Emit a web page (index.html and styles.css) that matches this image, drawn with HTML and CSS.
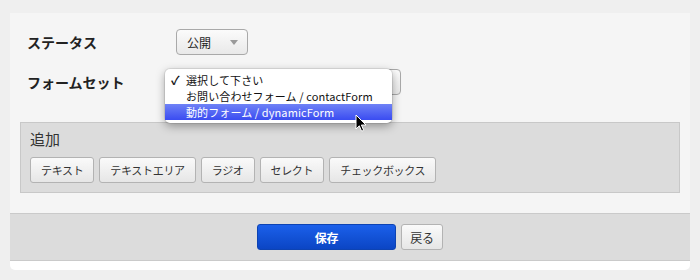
FILE: index.html
```html
<!DOCTYPE html>
<html lang="ja">
<head>
<meta charset="utf-8">
<link rel="stylesheet" href="styles.css">
</head>
<body>
<div class="card">
  <div class="content">
    <div class="row">
      <div class="label">ステータス</div>
      <div class="select s1"><span>公開</span><i class="arrow"></i></div>
    </div>
    <div class="row">
      <div class="label">フォームセット</div>
      <div class="select s2">
        <div class="popup">
          <div class="item"><span class="check">✓</span>選択して下さい</div>
          <div class="item">お問い合わせフォーム / contactForm</div>
          <div class="item active">動的フォーム / dynamicForm</div>
        </div>
        <svg class="cursor" width="12" height="19" viewBox="0 0 12 19"><path d="M1 1 L1 15 L4.3 11.8 L6.6 17.2 L8.7 16.3 L6.4 11 L11 11 Z" fill="#000" stroke="#fff" stroke-width="1" stroke-linejoin="round"/></svg>
      </div>
    </div>
    <div class="panel">
      <div class="panel-title">追加</div>
      <div class="btns">
        <button class="btn">テキスト</button>
        <button class="btn">テキストエリア</button>
        <button class="btn">ラジオ</button>
        <button class="btn">セレクト</button>
        <button class="btn">チェックボックス</button>
      </div>
    </div>
  </div>
  <div class="footer">
    <button class="btn primary">保存</button>
    <button class="btn back">戻る</button>
  </div>
</div>
</body>
</html>
```
FILE: styles.css
```css
* { box-sizing: border-box; }
body {
  margin: 0;
  background: #efefef;
  font-family: "Noto Sans CJK JP", "Noto Sans", sans-serif;
  color: #222;
}
.card {
  margin: 13px 0 0 10px;
  width: 680px;
  height: 257px;
  background: #fff;
  border-radius: 0 0 5px 5px;
  overflow: hidden;
}
.content {
  background: #f5f5f5;
  padding: 16px 0 20px;
}
.row {
  display: flex;
  align-items: center;
  padding-left: 17px;
  height: 26px;
  margin-bottom: 14px;
}
.row + .row { margin-bottom: 0; }
.label {
  width: 149px;
  font-size: 14px;
  font-weight: bold;
  line-height: 26px;
}
.select {
  position: relative;
  height: 26px;
  border: 1px solid #a9a9a9;
  border-radius: 4px;
  background: linear-gradient(#fbfbfb, #e9e9e9);
  display: flex;
  align-items: center;
  font-size: 12px;
}
.s1 { width: 72px; padding: 0 9px 0 10px; justify-content: space-between; }
.s2 { width: 225px; }
.arrow {
  width: 0; height: 0;
  border-left: 4px solid transparent;
  border-right: 4px solid transparent;
  border-top: 5px solid #9a9a9a;
}
.popup {
  position: absolute;
  left: -12px;
  top: -1px;
  width: 227px;
  height: 54px;
  background: #fff;
  border-radius: 5px;
  padding: 3px 0;
  box-shadow: 0 3px 10px rgba(0,0,0,0.35), 0 0 0 1px rgba(0,0,0,0.08);
  z-index: 2;
}
.item {
  height: 16px;
  line-height: 16px;
  padding-left: 21px;
  font-size: 11px;
  color: #111;
  position: relative;
  white-space: nowrap;
  letter-spacing: 0.1px;
}
.check {
  position: absolute;
  left: 6px;
  font-weight: bold;
  font-size: 12px;
}
.item.active {
  background: linear-gradient(#6f82f6, #3a4cf1);
  color: #fff;
}
.cursor {
  position: absolute;
  left: 178px;
  top: 44px;
  z-index: 3;
}
.panel {
  margin: 27px 10px 0;
  background: #dcdcdc;
  border: 1px solid #c8c8c8;
  padding: 7px 9px 9px;
}
.panel-title {
  font-size: 15px;
  line-height: 18px;
  color: #333;
  margin-bottom: 9px;
}
.btns { display: flex; gap: 5px; }
.btn {
  height: 26px;
  padding: 0 10px;
  border: 1px solid #b3b3b3;
  border-radius: 3px;
  background: linear-gradient(#fafafa, #e6e6e6);
  font-family: "Noto Sans CJK JP", sans-serif;
  font-size: 11px;
  letter-spacing: -0.33px;
  color: #333;
}
.footer {
  background: #dcdcdc;
  border-top: 1px solid #cacaca;
  border-bottom: 1px solid #cacaca;
  height: 48px;
  display: flex;
  justify-content: center;
  align-items: center;
  gap: 5px;
}
.primary {
  width: 139px;
  background: linear-gradient(#1b60ea, #0b45c4);
  border-color: #0d43b3;
  color: #fff;
  font-weight: bold;
  font-size: 12px;
}
.back { width: 42px; padding: 0; font-size: 12px; }
```
